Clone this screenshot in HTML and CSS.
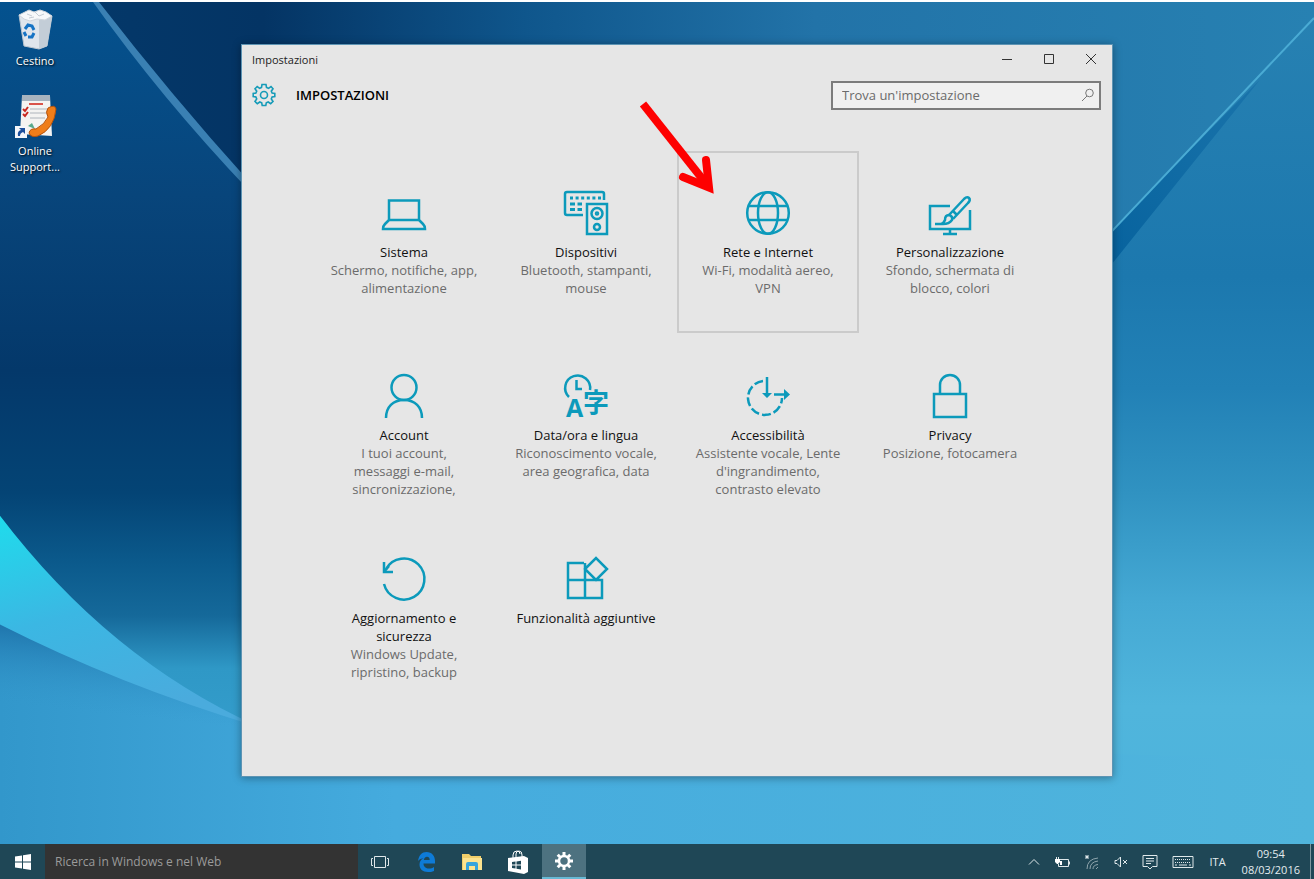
FILE: index.html
```
<!DOCTYPE html>
<html lang="it">
<head>
    <meta charset="UTF-8">
    <meta name="viewport" content="width=device-width, initial-scale=1.0">
    <title>Impostazioni</title>
    <link rel="stylesheet" href="styles.css">
</head>
<body>
    <svg class="wallpaper" viewBox="0 0 1314 879" preserveAspectRatio="none" aria-hidden="true">
        <defs>
            <linearGradient id="sky" x1="0" y1="0" x2="1" y2="0">
                <stop offset="0" stop-color="#043a6c"/>
                <stop offset=".2" stop-color="#043464"/>
                <stop offset=".4" stop-color="#0f568c"/>
                <stop offset=".62" stop-color="#2273a8"/>
                <stop offset="1" stop-color="#2781b2"/>
            </linearGradient>
            <linearGradient id="left" x1="0" y1="0" x2="0" y2="1">
                <stop offset="0" stop-color="#04528f"/>
                <stop offset=".22" stop-color="#08457b"/>
                <stop offset=".42" stop-color="#04386a"/>
                <stop offset=".56" stop-color="#044475"/>
                <stop offset=".64" stop-color="#0b5a8c"/>
                <stop offset=".7" stop-color="#15699a"/>
                <stop offset=".76" stop-color="#2f98c6"/>
                <stop offset="1" stop-color="#40a8d8"/>
            </linearGradient>
            <linearGradient id="right" x1="0" y1="0" x2="0" y2="1">
                <stop offset="0" stop-color="#2781b2"/>
                <stop offset=".3" stop-color="#1c78ae"/>
                <stop offset=".43" stop-color="#2281b6"/>
                <stop offset=".55" stop-color="#3092c1"/>
                <stop offset=".68" stop-color="#45a9d4"/>
                <stop offset=".8" stop-color="#50b5dc"/>
                <stop offset="1" stop-color="#4bb2dc"/>
            </linearGradient>
            <linearGradient id="swoosh" x1="0" y1="0" x2=".35" y2="1">
                <stop offset="0" stop-color="#1fdcec"/>
                <stop offset=".5" stop-color="#3bb7e3"/>
                <stop offset="1" stop-color="#4aabdd"/>
            </linearGradient>
            <linearGradient id="floor" x1="0" y1="0" x2="1" y2="0">
                <stop offset="0" stop-color="#3297cb"/>
                <stop offset=".3" stop-color="#45abde"/>
                <stop offset="1" stop-color="#50b5dc"/>
            </linearGradient>
            <linearGradient id="shade" x1="0" y1="0" x2="-.15" y2="1">
                <stop offset="0" stop-color="#1a6da5" stop-opacity=".8"/>
                <stop offset=".5" stop-color="#3297cb" stop-opacity="0"/>
            </linearGradient>
            <linearGradient id="crease" x1="0" y1="1" x2="1" y2="0">
                <stop offset="0" stop-color="#04609c"/>
                <stop offset="1" stop-color="#1a74ab"/>
            </linearGradient>
        </defs>
        <rect width="1314" height="879" fill="url(#sky)"/>
        <path d="M0 0H95Q165 95 260 195V879H0z" fill="url(#left)"/>
        <path d="M93 0H99Q170 92 250 181V190Q160 95 93 0z" fill="#3a80b3"/>
        <path d="M1090 253Q1205 132 1314 16V879H1090z" fill="url(#right)"/>
        <path d="M1090 253Q1205 132 1260 78Q1190 165 1090 290z" fill="url(#crease)"/>
        <path d="M1090 253Q1205 132 1314 16" fill="none" stroke="#4aabd4" stroke-width="2"/>
        <path d="M0 624Q150 692 260 726L1314 760V879H0z" fill="url(#floor)"/>
        <path d="M0 624Q150 692 241 720L200 780L0 720z" fill="url(#shade)"/>
        <path d="M0 515Q110 660 260 727Q120 685 0 624z" fill="url(#swoosh)"/>
    </svg>

    <main class="desktop">
        <nav class="shortcuts" aria-label="Desktop">
            <a class="shortcut" href="#cestino">
                <svg width="40" height="42" viewBox="0 0 40 42">
                    <path d="M4 7L37 8L32 38L24 41L9 38z" fill="#dfe5ec" stroke="#b9c4cf"/>
                    <path d="M24 12L37 8L32 38L24 41z" fill="#c3cdd7"/>
                    <path d="M4 7L10 4L14 2L19 4L25 2L31 4L37 8L30 12L22 11L15 13L9 11z" fill="#f7f8fa" stroke="#cfd5dc"/>
                    <path d="M12 6L17 8M20 4L24 8L29 6M14 10L19 9" fill="none" stroke="#c5ccd5"/>
                    <path d="M10 21L13 17L17 18L19 22M19 25L17 29L13 29M11 28L9 24" fill="none" stroke="#1673c4" stroke-width="3"/>
                </svg>
                <span>Cestino</span>
            </a>
            <a class="shortcut" href="#support">
                <svg width="44" height="46" viewBox="0 0 44 46">
                    <path d="M9 2H37L39 42L7 40z" fill="#f4f3f1"/>
                    <path d="M9 1H37V7H9z" fill="#a7b3bf"/>
                    <path d="M16 10H30" stroke="#d9534a" stroke-width="2"/>
                    <path d="M17 15H34M17 19H34M17 24H32" stroke="#aeb4bb"/>
                    <path d="M10 15L12 17L15 13M10 20L12 22L15 18" fill="none" stroke="#c82820" stroke-width="2"/>
                    <path d="M15 32L19 29L22 35z" fill="#58a98c"/>
                    <path d="M35 14Q42 10 43 15Q41 35 25 42Q18 44 16 39Q17 34 23 35Q32 30 35 23Q32 18 35 14z" fill="#ef7d1a" stroke="#b5520c"/>
                    <path d="M2 32H14V44H2z" fill="#f4f6fa"/>
                    <path d="M5 42Q4 37 8 36L6 34H12V40L10 38Q7 39 7 42z" fill="#1c4f9c"/>
                </svg>
                <span>Online Support...</span>
            </a>
        </nav>

        <section class="window">
            <header class="titlebar">
                <span class="titlebar-text">Impostazioni</span>
                <div class="window-buttons">
                    <button type="button" aria-label="Riduci a icona"><svg width="12" height="12" viewBox="0 0 12 12"><path d="M1 6.500H11"/></svg></button>
                    <button type="button" aria-label="Ingrandisci"><svg width="12" height="12" viewBox="0 0 12 12"><path d="M1.500 1.500H10.500V10.500H1.500z"/></svg></button>
                    <button type="button" aria-label="Chiudi"><svg width="12" height="12" viewBox="0 0 12 12"><path d="M1 1L11 11M11 1L1 11"/></svg></button>
                </div>
            </header>

            <div class="toolbar">
                <svg class="gear" width="24" height="24" viewBox="0 0 24 24">
                    <path d="M10 1.500L14 1.500L14.500 4.500L16.500 5.300L19 3.500L21 5.800L19.300 8.200L20.100 10L22.800 10.500V13.500L20.100 14L19.300 16L21 18.500L18.700 20.700L16.200 19L14.300 19.800L13.800 22.500H10.200L9.700 19.800L7.800 19L5.300 20.700L3 18.500L4.700 16L3.900 14L1.200 13.500V10.500L3.900 10L4.700 8.200L3 5.800L5.200 3.500L7.700 5.300L9.500 4.500z"/>
                    <circle cx="12" cy="12" r="3.500"/>
                </svg>
                <h1>IMPOSTAZIONI</h1>
                <form class="search" role="search">
                    <input type="text" placeholder="Trova un'impostazione" aria-label="Trova un'impostazione">
                    <svg width="14" height="14" viewBox="0 0 14 14"><circle cx="8.500" cy="5" r="3.800"/><path d="M6 8L1 13"/></svg>
                </form>
            </div>

            <div class="tiles">
                <a class="tile" href="#sistema">
                    <svg class="icon" viewBox="0 0 44 44">
                        <path d="M7 9.500H37V29H7zM7 29L3 33Q1 35 1 38H43Q43 35 41 33L37 29"/>
                    </svg>
                    <h2>Sistema</h2>
                    <p>Schermo, notifiche, app, alimentazione</p>
                </a>
                <a class="tile" href="#dispositivi">
                    <svg class="icon" viewBox="0 0 44 44">
                        <path d="M19 24H3Q1 24 1 22V3Q1 1 3 1H38Q40 1 40 3V9"/>
                        <path d="M6 7H37" stroke-width="3" stroke-dasharray="3 2.600"/>
                        <path d="M6 13H18M6 18.500H18" stroke-width="3" stroke-dasharray="5 2.500"/>
                        <path d="M23 13H43V43H23z"/>
                        <circle cx="33" cy="22.500" r="5.500"/>
                        <circle cx="33" cy="22.500" r="1"/>
                        <circle cx="33" cy="36" r="3"/>
                    </svg>
                    <h2>Dispositivi</h2>
                    <p>Bluetooth, stampanti, mouse</p>
                </a>
                <a class="tile tile-active" href="#rete">
                    <svg class="icon" viewBox="0 0 44 44">
                        <circle cx="22" cy="22" r="20.800"/>
                        <ellipse cx="22" cy="22" rx="10" ry="20.800"/>
                        <path d="M3 15H41M3 29H41"/>
                    </svg>
                    <h2>Rete e Internet</h2>
                    <p>Wi-Fi, modalità aereo, VPN</p>
                    <svg class="pointer" width="80" height="100" viewBox="0 0 80 100" aria-hidden="true">
                        <path d="M6 9L71 91" stroke-linecap="butt"/>
                        <path d="M69 65L72 92.500L46 82"/>
                    </svg>
                </a>
                <a class="tile" href="#personalizzazione">
                    <svg class="icon" viewBox="0 0 44 44">
                        <path d="M22 15H2V38H42V19M22 38V43M15 43H29"/>
                        <path d="M7 33H15Q21 33 24 29Q25 25 21 24Q17 24 17 29Q16 32 13 33"/>
                        <path d="M21 24L36 8Q39 5 41 7Q43 9 40 12L25 28M25 20L29 24"/>
                    </svg>
                    <h2>Personalizzazione</h2>
                    <p>Sfondo, schermata di blocco, colori</p>
                </a>
                <a class="tile" href="#account">
                    <svg class="icon" viewBox="0 0 44 44">
                        <circle cx="22" cy="13.500" r="12.500"/>
                        <path d="M4 44C4 33 11 26 22 26S40 33 40 44"/>
                    </svg>
                    <h2>Account</h2>
                    <p>I tuoi account,<br>messaggi e-mail,<br>sincronizzazione,</p>
                </a>
                <a class="tile" href="#lingua">
                    <svg class="icon" viewBox="0 0 44 44">
                        <path d="M5 23A12.500 12.500 0 1 1 26 16"/>
                        <path d="M12.500 6V15H18"/>
                        <text class="latin" x="2" y="43">A</text>
                        <text class="kanji" x="19" y="38">字</text>
                    </svg>
                    <h2>Data/ora e lingua</h2>
                    <p>Riconoscimento vocale, area geografica, data</p>
                </a>
                <a class="tile" href="#accessibilita">
                    <svg class="icon" viewBox="0 0 44 44">
                        <path d="M17 7A17 17 0 1 0 36 24" stroke-dasharray="9 3"/>
                        <path d="M21 3V20M28 20.500H39"/>
                        <path class="solid" d="M16 19H26L21 24zM38 15L44 20.500L38 26z"/>
                    </svg>
                    <h2>Accessibilità</h2>
                    <p>Assistente vocale, Lente d'ingrandimento, contrasto elevato</p>
                </a>
                <a class="tile" href="#privacy">
                    <svg class="icon" viewBox="0 0 44 44">
                        <path d="M6 20H38V43H6zM12 20V11A10 10 0 0 1 32 11V20"/>
                    </svg>
                    <h2>Privacy</h2>
                    <p>Posizione, fotocamera</p>
                </a>
                <a class="tile" href="#aggiornamento">
                    <svg class="icon" viewBox="0 0 44 44">
                        <path d="M2 27A20.500 20.500 0 1 0 4 12"/>
                        <path d="M2 5V15H11"/>
                        <path d="M2 15L7 9"/>
                    </svg>
                    <h2>Aggiornamento e sicurezza</h2>
                    <p>Windows Update, ripristino, backup</p>
                </a>
                <a class="tile" href="#funzionalita">
                    <svg class="icon" viewBox="0 0 44 44">
                        <path d="M20 6H4V41H38V23H4M21 6V41M21 12L32 1L43 12L32 23z"/>
                    </svg>
                    <h2>Funzionalità aggiuntive</h2>
                </a>
            </div>
        </section>
    </main>

    <footer class="taskbar">
        <button class="start" type="button" aria-label="Start">
            <svg width="16" height="16" viewBox="0 0 16 16" fill="#fff"><path d="M0 2.500L7 1.500V7.500H0zM8 1.300L16 0V7.500H8zM0 8.500H7V14.500L0 13.500zM8 8.500H16V16L8 14.700z"/></svg>
        </button>
        <input class="taskbar-search" type="text" placeholder="Ricerca in Windows e nel Web" aria-label="Ricerca in Windows e nel Web">
        <div class="apps">
            <button type="button" aria-label="Visualizzazione attività">
                <svg width="20" height="14" viewBox="0 0 20 14" fill="none" stroke="#dfe8ea"><path d="M4.500 1.500H15.500V12.500H4.500zM3 3.500H1.500V10.500H3M17 3.500H18.500V10.500H17"/></svg>
            </button>
            <button type="button" aria-label="Microsoft Edge">
                <svg width="18" height="20" viewBox="0 0 18 20"><path d="M1 9C2 3 5 0 9.500 0C15 0 18 4 18 9V11.500H6.500C6.500 15 9 16.500 12 16.500C14 16.500 15.500 16 17 15V19C15 20 13 20 11 20C5.500 20 2.500 17 2.500 12.500C2.500 9.500 4 7.500 6.500 6.200C4.500 6.500 2.500 7 1 9zM6.800 8H12.700C12.700 6 12 4.700 10 4.700C8.200 4.700 7.200 6 6.800 8z" fill="#0e7bd7" fill-rule="evenodd"/></svg>
            </button>
            <button type="button" aria-label="Esplora file">
                <svg width="20" height="20" viewBox="0 0 20 20"><path d="M0 2H7L9 4H19V18H0z" fill="#f0cf6a"/><path d="M1 6H20V18H1z" fill="#fbe38f"/><path d="M4 12Q4 10 6 10H14Q16 10 16 12V18H13V14H7V18H4z" fill="#35a4dc"/></svg>
            </button>
            <button type="button" aria-label="Store">
                <svg width="20" height="24" viewBox="0 0 20 24"><path d="M5 8V5Q5 1 9 1Q12 1 12 4M8 8V4Q8 1 11 1Q14 1 14 5V7" fill="none" stroke="#fff"/><path d="M0 8L16 6L20 8V22L16 24L0 21z" fill="#fff"/><path d="M4 12L7.500 11.500V14.500H4zM8.500 11.400L13 10.800V14.500H8.500zM4 15.500H7.500V18.600L4 18zM8.500 15.500H13V19.400L8.500 18.700z" fill="#1f4756"/></svg>
            </button>
            <button class="running" type="button" aria-label="Impostazioni">
                <svg width="18" height="18" viewBox="0 0 18 18" fill="none" stroke="#fff"><circle cx="9" cy="9" r="5" stroke-width="2.500"/><path d="M9 0V4M9 14V18M0 9H4M14 9H18M2.700 2.700L5.300 5.300M12.700 12.700L15.300 15.300M15.300 2.700L12.700 5.300M5.300 12.700L2.700 15.300" stroke-width="3"/></svg>
            </button>
        </div>
        <div class="tray">
            <svg width="12" height="8" viewBox="0 0 12 8"><path d="M1 6.500L6 1.500L11 6.500"/></svg>
            <svg width="16" height="12" viewBox="0 0 16 12"><path d="M6 3.500H14.500V10.500H4.500V8M15.500 5.500V8.500M2.500 1V3M4.500 1V3"/><path d="M1 3H6V6L4 8H3L1 6zM6 5H8V9H6z" fill="#fff" stroke="none"/></svg>
            <svg width="16" height="16" viewBox="0 0 16 16"><path d="M3 15Q3 5 14 4M6 15Q6 8 14 7M9 15Q9 11 14 10.500" stroke="#8fa5ad"/><path d="M3 1V5M1 3H5M1.500 1.500L4.500 4.500M4.500 1.500L1.500 4.500"/><path d="M12 15L14 13" stroke="#8fa5ad"/></svg>
            <svg width="14" height="12" viewBox="0 0 14 12"><path d="M1 4.500H3L6.500 1V11L3 7.500H1zM9 4L13 8M13 4L9 8"/></svg>
            <svg width="16" height="16" viewBox="0 0 16 16"><path d="M1 1.500H15V12.500H10.500L8 15L5.500 12.500H1zM4 4.500H12M4 7H12M4 9.500H9"/></svg>
            <svg width="22" height="14" viewBox="0 0 22 14"><path d="M1 1.500H21V12.500H1z"/><path d="M3 4.500H19M3 7.500H19" stroke-dasharray="1 1"/><path d="M3 10H5M7 10H15M17 10H19"/></svg>
            <button class="lang" type="button">ITA</button>
            <time class="clock" datetime="2016-03-08T09:54">09:54<br>08/03/2016</time>
            <button class="show-desktop" type="button" aria-label="Mostra desktop"></button>
        </div>
    </footer>
</body>
</html>
```
FILE: styles.css
```
* {
    box-sizing: border-box;
}
body {
    margin: 0;
    min-height: 100vh;
    display: flex;
    flex-direction: column;
    border-top: 2px solid #fff;
    font-family: "Open Sans", "Noto Sans", sans-serif;
    font-size: 13px;
    position: relative;
}
button {
    font: inherit;
    color: inherit;
    background: none;
    border: 0;
    padding: 0;
    display: flex;
    align-items: center;
    justify-content: center;
}
a {
    color: inherit;
    text-decoration: none;
}
svg {
    flex: none;
}
.wallpaper {
    position: absolute;
    inset: 0;
    width: 100%;
    height: 100%;
    z-index: -1;
}

/* Desktop */
.desktop {
    flex: 1;
    display: flex;
    padding: 0 201px 67px 0;
}
.shortcuts {
    width: 241px;
    flex: none;
    padding-top: 6px;
}
.shortcut {
    width: 70px;
    display: flex;
    flex-direction: column;
    align-items: center;
    gap: 3px;
    margin-bottom: 25px;
    color: #fff;
    font-size: 11px;
    line-height: 16px;
    text-align: center;
    text-shadow: 1px 1px 2px #000;
}

/* Settings window */
.window {
    flex: 1;
    margin-top: 42px;
    background: #e6e6e6;
    border: 1px solid #5d94b4;
    box-shadow: 0 1px 8px rgba(0,0,0,0.35);
}
.titlebar {
    display: flex;
    justify-content: space-between;
    align-items: center;
    height: 28px;
    padding-left: 10px;
    font-size: 11px;
    color: #222;
}
.window-buttons {
    display: flex;
}
.window-buttons button {
    width: 42px;
    height: 28px;
}
.window-buttons svg {
    fill: none;
    stroke: #333;
}
.toolbar {
    display: flex;
    align-items: center;
    height: 44px;
    padding: 0 11px 0 10px;
}
.gear {
    fill: none;
    stroke: #169bb8;
    stroke-width: 1.600;
}
.toolbar h1 {
    margin: 0 auto 0 20px;
    font-size: 13px;
    font-weight: 600;
}
.search {
    display: flex;
    align-items: center;
    width: 270px;
    height: 29px;
    padding: 0 4px 0 9px;
    border: 2px solid #7c7c7c;
    background: #f0f0f0;
}
.search input {
    flex: 1;
    min-width: 0;
    padding: 0;
    border: 0;
    outline: 0;
    background: none;
    font: inherit;
}
.search input::placeholder {
    color: #6b6b6b;
}
.search svg {
    fill: none;
    stroke: #777;
}

.tiles {
    display: grid;
    grid-template-columns: repeat(4, 182px);
    grid-auto-rows: 182px;
    row-gap: 1px;
    justify-content: center;
    margin-top: 34px;
}
.tile {
    position: relative;
    padding: 38px 14px 0;
    border: 2px solid transparent;
    line-height: 18px;
    text-align: center;
}
.tile-active {
    border-color: #cbcbcb;
}
.tile h2 {
    margin: 8px 0 0;
    font-size: 13px;
    font-weight: 400;
    color: #111;
}
.tile p {
    margin: 0;
    color: #6b6b6b;
}
.icon {
    display: block;
    width: 44px;
    height: 44px;
    margin: 0 auto;
    overflow: visible;
    fill: none;
    stroke: #0c9abb;
    stroke-width: 2.500;
}
.icon .solid,
.icon text {
    fill: #0c9abb;
    stroke: none;
}
.latin {
    font-size: 25px;
    font-weight: 700;
}
.kanji {
    font-family: "Noto Sans CJK JP", sans-serif;
    font-size: 26px;
    font-weight: 700;
}
.pointer {
    position: absolute;
    left: -42px;
    top: -58px;
    fill: none;
    stroke: #fe0000;
    stroke-width: 8;
    stroke-linecap: round;
    stroke-linejoin: miter;
}

/* Taskbar */
.taskbar {
    display: flex;
    height: 35px;
    background: #1f4756;
    color: #e4ecef;
    font-size: 12px;
}
.start {
    width: 45px;
}
.taskbar-search {
    width: 313px;
    padding: 0 10px;
    border: 0;
    outline: 0;
    background: #333;
    font: inherit;
}
.taskbar-search::placeholder {
    color: #9b9b9b;
}
.apps {
    display: flex;
    gap: 2px;
}
.apps button {
    width: 44px;
}
.apps .running {
    background: #4d7280;
    border-bottom: 2px solid #67b9d4;
}
.tray {
    display: flex;
    align-items: center;
    gap: 14px;
    margin-left: auto;
}
.tray svg {
    fill: none;
    stroke: #dfe8ea;
}
.lang {
    margin-left: 2px;
    font-size: 11px;
}
.clock {
    margin-left: 2px;
    font-size: 11px;
    line-height: 16px;
    text-align: center;
}
.show-desktop {
    width: 4px;
    height: 35px;
    margin-left: -4px;
    border-left: 1px solid #7f979f;
}
```
